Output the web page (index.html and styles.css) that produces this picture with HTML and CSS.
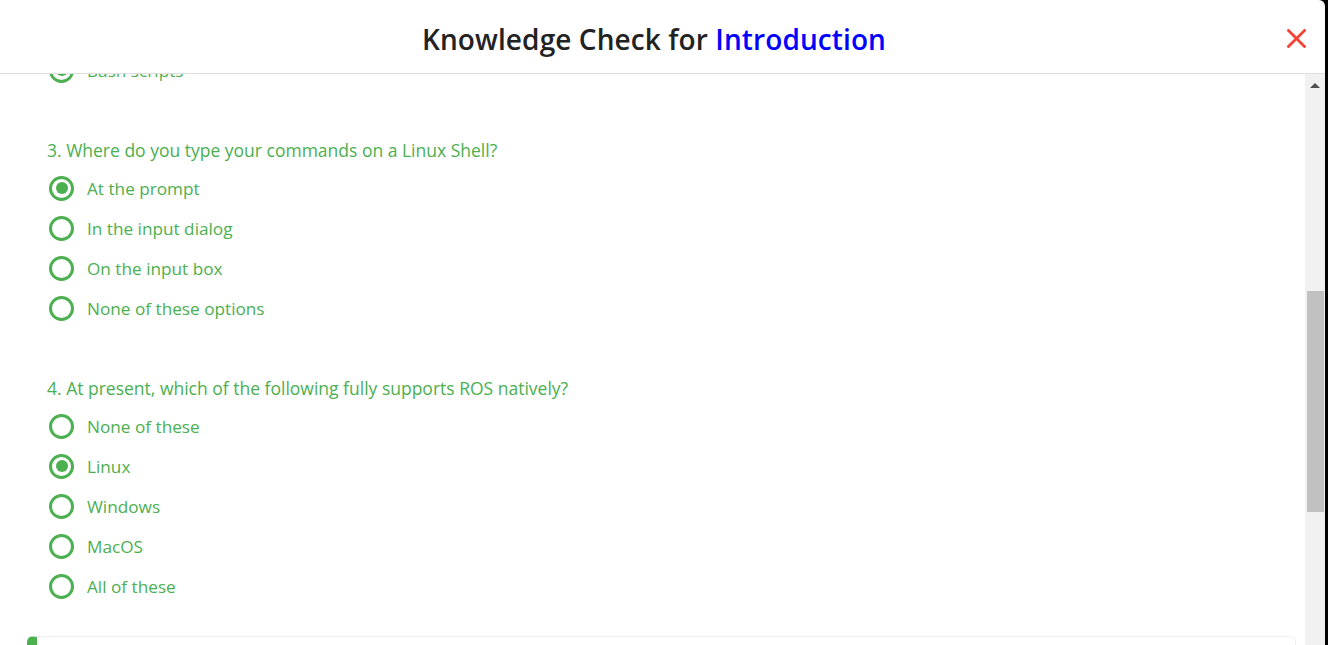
FILE: index.html
```html
<!DOCTYPE html>
<html lang="en">
<head>
<meta charset="utf-8">
<title>Knowledge Check for Introduction</title>
<link rel="stylesheet" href="styles.css">
</head>
<body>
<div class="modal">
  <header class="modal-header">
    <h1 class="modal-title">Knowledge Check for <span class="topic">Introduction</span></h1>
    <button class="close-btn" aria-label="Close">
      <svg width="19" height="19" viewBox="0 0 19 19"><path d="M1.5 1.5 L17.5 17.5 M17.5 1.5 L1.5 17.5" stroke="#f44336" stroke-width="2.8" stroke-linecap="square" fill="none"/></svg>
    </button>
  </header>
  <div class="modal-body">
    <div class="scroll-view">
      <div class="content">
        <label class="option"><span class="radio checked"></span><span class="label">Bash scripts</span></label>

        <section class="question">
          <p class="q-text">3. Where do you type your commands on a Linux Shell?</p>
          <label class="option"><span class="radio checked"></span><span class="label">At the prompt</span></label>
          <label class="option"><span class="radio"></span><span class="label">In the input dialog</span></label>
          <label class="option"><span class="radio"></span><span class="label">On the input box</span></label>
          <label class="option"><span class="radio"></span><span class="label">None of these options</span></label>
        </section>

        <section class="question">
          <p class="q-text">4. At present, which of the following fully supports ROS natively?</p>
          <label class="option"><span class="radio"></span><span class="label">None of these</span></label>
          <label class="option"><span class="radio checked"></span><span class="label">Linux</span></label>
          <label class="option"><span class="radio"></span><span class="label">Windows</span></label>
          <label class="option"><span class="radio"></span><span class="label">MacOS</span></label>
          <label class="option"><span class="radio"></span><span class="label">All of these</span></label>
        </section>

        <div class="card"></div>
      </div>
    </div>
    <div class="scrollbar">
      <div class="sb-btn"><span class="arrow up"></span></div>
      <div class="sb-track"><div class="sb-thumb"></div></div>
      <div class="sb-btn"><span class="arrow down"></span></div>
    </div>
  </div>
</div>
</body>
</html>
```
FILE: styles.css
```css
* { box-sizing: border-box; }
html, body { margin: 0; height: 100%; }
body {
  background: #000;
  overflow: hidden;
  font-family: "Open Sans", "Lato", sans-serif;
}
.modal {
  width: 1325px;
  height: 660px;
  background: #fff;
  border-top-right-radius: 6px;
  display: flex;
  flex-direction: column;
}
.modal-header {
  height: 74px;
  flex: none;
  border-bottom: 1px solid #dedede;
  display: grid;
  align-items: center;
}
.modal-title {
  grid-area: 1 / 1;
  margin: 0;
  padding-right: 17px;
  text-align: center;
  font-family: "Open Sans", sans-serif;
  font-weight: 600;
  font-size: 28px;
  letter-spacing: 0.1px;
  color: #222;
  line-height: 36px;
  padding-top: 5px;
}
.topic { color: #0000ff; }
.close-btn {
  grid-area: 1 / 1;
  justify-self: end;
  margin-right: 19px;
  margin-top: 3px;
  width: 19px;
  height: 19px;
  padding: 0;
  border: 0;
  background: none;
  display: flex;
}
.modal-body {
  flex: 1;
  display: flex;
  min-height: 0;
}
.scroll-view {
  flex: 1;
  overflow: hidden;
}
.content {
  margin-top: -24px;
  padding: 0 9px 0 27px;
}
.option {
  display: flex;
  align-items: center;
  height: 40px;
  padding-left: 22px;
  color: #4caf50;
  font-size: 17.2px;
}
.radio {
  width: 25px;
  height: 25px;
  border: 3px solid #4caf50;
  border-radius: 50%;
  display: flex;
  align-items: center;
  justify-content: center;
  flex: none;
}
.radio.checked::after {
  content: "";
  width: 12px;
  height: 12px;
  border-radius: 50%;
  background: #4caf50;
}
.label { margin-left: 13px; }
.question { margin-top: 48px; }
.q-text {
  margin: 0 0 6px;
  padding-left: 20px;
  line-height: 24px;
  font-size: 17.5px;
  color: #4caf50;
}
.card {
  margin-top: 30px;
  height: 60px;
  border: 1px solid #eee;
  border-left: 10px solid #4caf50;
  border-radius: 6px;
}
.scrollbar {
  width: 20px;
  flex: none;
  background: #f1f1f1;
  display: flex;
  flex-direction: column;
}
.sb-btn {
  height: 23px;
  display: flex;
  align-items: center;
  justify-content: center;
}
.arrow {
  width: 0;
  height: 0;
  border-left: 5px solid transparent;
  border-right: 5px solid transparent;
}
.arrow.up { border-bottom: 5px solid #505050; }
.arrow.down { border-top: 5px solid #505050; }
.sb-track { flex: 1; padding: 194px 1px 0 2px; }
.sb-thumb { height: 221px; background: #c1c1c1; }
```
